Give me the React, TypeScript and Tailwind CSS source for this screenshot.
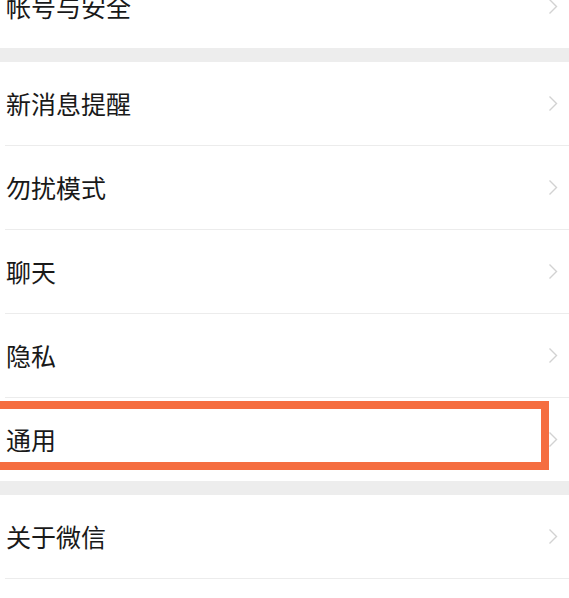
import React from 'react';

const font = { fontFamily: '"Noto Sans CJK SC", "Noto Sans", sans-serif' };

const Chevron: React.FC = () => (
  <svg width="10" height="17" viewBox="0 0 10 17" fill="none" className="shrink-0">
    <polyline points="1.5,1.5 8.5,8.5 1.5,15.5" stroke="#d2d2d2" strokeWidth="1.4" />
  </svg>
);

const Row: React.FC<{ label: string; divider?: boolean; highlight?: boolean; className?: string }> = ({
  label,
  divider = true,
  highlight = false,
  className = '',
}) => (
  <div className={`relative bg-white ${className}`}>
    <div className="h-[83px] flex items-center justify-between pl-[6px] pr-[11px]">
      <span className="text-[25px] text-[#191919] leading-none">{label}</span>
      <Chevron />
    </div>
    {divider && <div className="ml-[5px] h-px bg-[#ececec]" />}
    {highlight && (
      <div className="absolute top-[3px] -left-[10px] right-[20px] h-[69px] border-[8px] border-[#f56d40]" />
    )}
  </div>
);

const Gap: React.FC = () => <div className="h-[14px] bg-[#ededed]" />;

export default function App() {
  const group = ['新消息提醒', '勿扰模式', '聊天', '隐私', '通用'];
  return (
    <div className="w-[569px] h-[598px] overflow-hidden bg-white" style={font}>
      <Row label="帐号与安全" divider={false} className="-mt-[35px]" />
      <Gap />
      {group.map((label, i) => (
        <Row key={label} label={label} divider={i < group.length - 1} highlight={label === '通用'} />
      ))}
      <Gap />
      <Row label="关于微信" />
      <Row label="" divider={false} />
    </div>
  );
}
